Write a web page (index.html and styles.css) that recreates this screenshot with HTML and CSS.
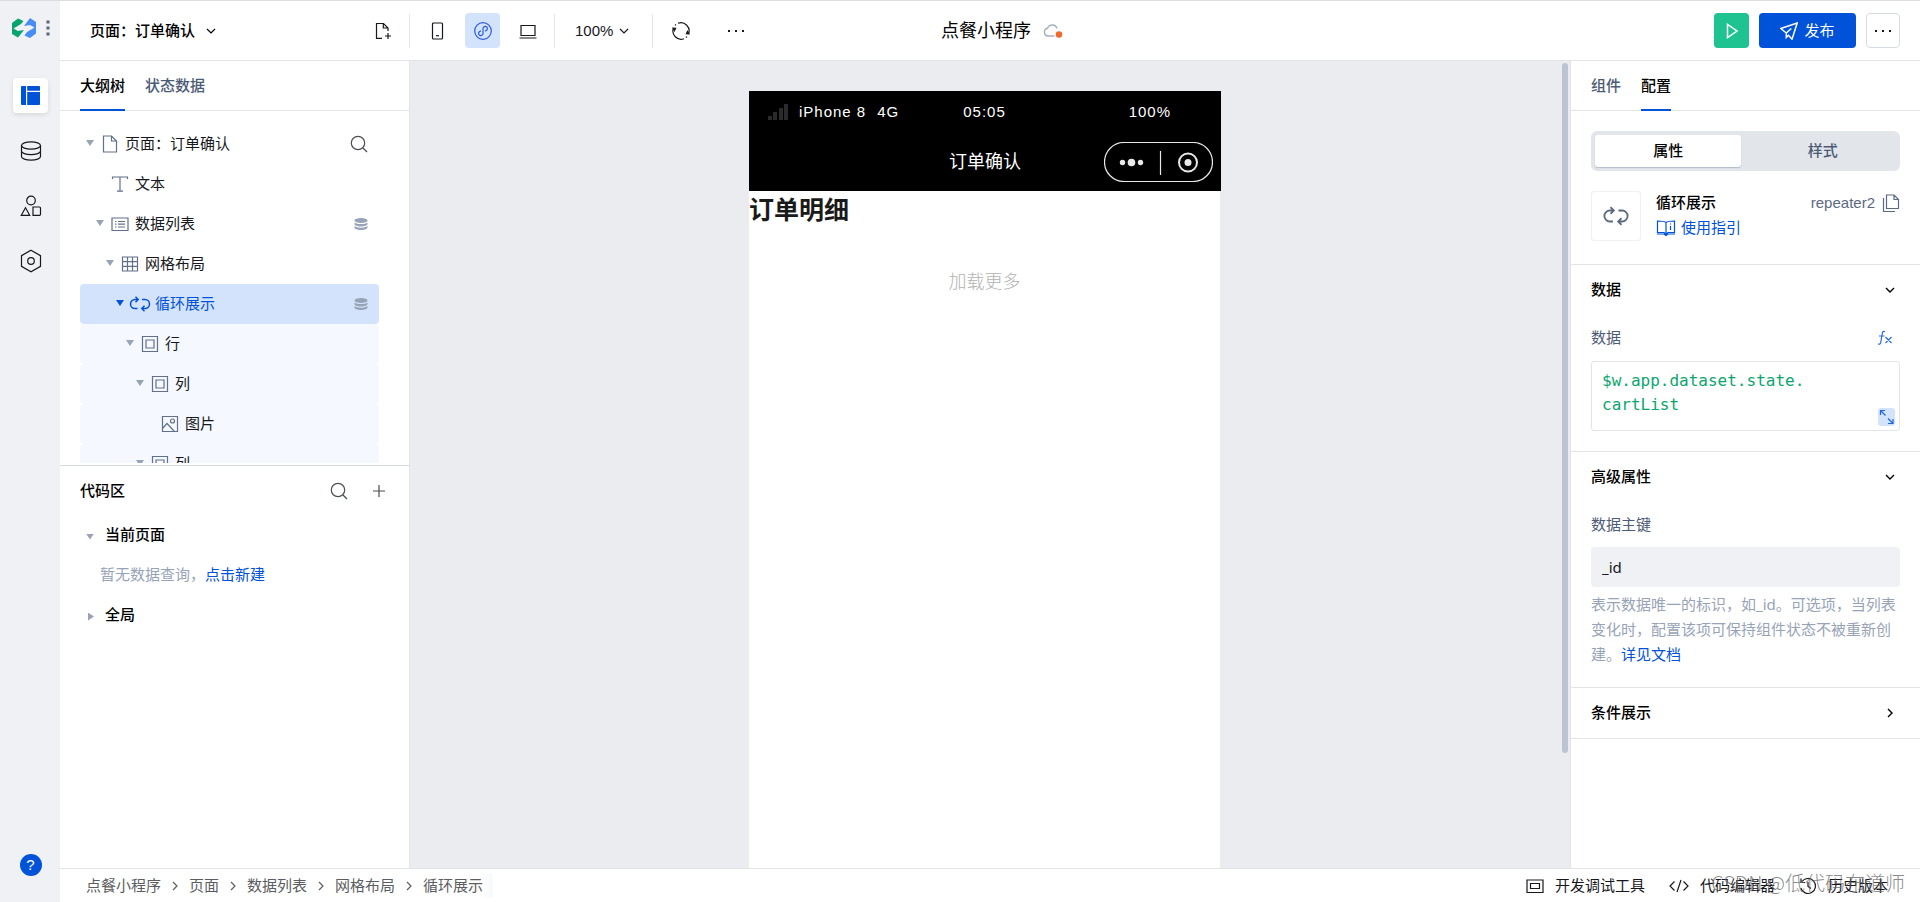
FILE: index.html
```html
<!DOCTYPE html>
<html lang="zh-CN">
<head>
<meta charset="utf-8">
<title>点餐小程序</title>
<link rel="stylesheet" href="styles.css">
</head>
<body>
<svg class="sprite" aria-hidden="true">
  <symbol id="chev-down" viewBox="0 0 10 10"><path d="M1 3l4 4 4-4"/></symbol>
  <symbol id="chev-right" viewBox="0 0 10 10"><path d="M3 1l4 4-4 4"/></symbol>
  <symbol id="search" viewBox="0 0 18 18"><circle cx="8" cy="8" r="6.700"/><path d="M13 13l4 4"/></symbol>
  <symbol id="stack" viewBox="0 0 14 14"><ellipse cx="7" cy="3.500" rx="6.500" ry="2.500" fill="currentColor" stroke="none"/><path d="M.5 5.500v1.500C.5 8.500 3.300 9.500 7 9.500S13.500 8.500 13.500 7V5.500C12 6.700 10 7.100 7 7.100S2 6.700.5 5.500zM.5 9v1.500C.5 12 3.300 13 7 13s6.500-1 6.500-2.500V9C12 10.300 10 10.700 7 10.700S2 10.300.5 9z" fill="currentColor" stroke="none"/></symbol>
  <symbol id="frame" viewBox="0 0 18 18"><path d="M1.500 1.500h15v15h-15zM5 5h8v8H5z"/></symbol>
  <symbol id="loop" viewBox="0 0 22 18"><path d="M8.500 13.500H6a4.500 4.500 0 0 1 0-9h3M6.500 1.800l2.700 2.700-2.700 2.700M13 4.500h3a4.500 4.500 0 0 1 0 9h-3M15.500 10.800l-2.700 2.700 2.700 2.700"/></symbol>
  <symbol id="dots" viewBox="0 0 18 4"><path d="M1 1h2v2H1zM8 1h2v2H8zM15 1h2v2h-2z" fill="currentColor" stroke="none"/></symbol>
</svg>
<div class="app">
  <nav class="rail" aria-label="主导航">
    <div class="brand">
      <svg width="24" height="20" viewBox="0 0 24 20"><path d="M0 5L6 .5 11.500 3 9 6 1.500 10.500 6 13l6-1-6 7.500-6-3.500z" fill="#07a56b" stroke="none"/><path d="M24 15.500L18 20l-5.500-2.500L15 14l7.500-4.500L18 7l-6 1 6-8 6 4z" fill="#488df5" stroke="none"/></svg>
      <svg class="brand-dots" width="4" height="16" viewBox="0 0 4 16"><path d="M.5 .5h3v3h-3zM.5 6.500h3v3h-3zM.5 12.500h3v3h-3z" fill="currentColor" stroke="none"/></svg>
    </div>
    <button class="rail-btn active" aria-label="页面"><svg width="19" height="19" viewBox="0 0 19 19"><path d="M1 0h4v19H1a1 1 0 0 1-1-1V1a1 1 0 0 1 1-1zM6.200 0H18a1 1 0 0 1 1 1v3.700H6.200zM6.200 5.900H19V18a1 1 0 0 1-1 1H6.200z" fill="currentColor" stroke="none"/></svg></button>
    <button class="rail-btn" aria-label="数据源"><svg width="22" height="20" viewBox="0 0 22 20"><ellipse cx="11" cy="4.500" rx="9.500" ry="3.700"/><path d="M1.500 4.500v11c0 2 4.200 3.700 9.500 3.700s9.500-1.700 9.500-3.700v-11M1.500 10c0 2 4.200 3.700 9.500 3.700s9.500-1.700 9.500-3.700"/></svg></button>
    <button class="rail-btn" aria-label="组件库"><svg width="22" height="22" viewBox="0 0 22 22"><circle cx="11" cy="5.500" r="4.300"/><path d="M5.500 12.800l4.200 7.500H1.300zM13 12h6.500a1 1 0 0 1 1 1v6.300a1 1 0 0 1-1 1H13z"/></svg></button>
    <button class="rail-btn" aria-label="设置"><svg width="22" height="24" viewBox="0 0 22 24"><path d="M11 1.300l9.500 5.400v10.600L11 22.700l-9.500-5.400V6.700z"/><circle cx="11" cy="12" r="3.300"/></svg></button>
    <button class="help" aria-label="帮助">?</button>
  </nav>

  <header class="topbar">
    <div class="tools">
      <div class="page-pick">
        <select aria-label="页面"><option>页面：订单确认</option></select>
        <svg width="10" height="10"><use href="#chev-down"/></svg>
      </div>
      <button class="tool" aria-label="新建页面"><svg width="18" height="18" viewBox="0 0 18 18"><path d="M8 16.300H2.500V1.500h7l4.500 4.500v3M9.300 1.500V6H14M14 11v6M11 14h6"/></svg></button>
      <i class="rule"></i>
      <div class="devices">
        <button class="tool" aria-label="手机"><svg width="18" height="18" viewBox="0 0 18 18"><rect x="3.500" y="1" width="10" height="16" rx="1"/><path d="M7 13.700h3"/></svg></button>
        <button class="tool on" aria-label="小程序"><svg width="18" height="18" viewBox="0 0 18 18"><circle cx="9" cy="9" r="8.300"/><path d="M7 9.200a2.200 2.200 0 1 0 2 2.300V6.500a2.200 2.200 0 1 1 2 2.300"/></svg></button>
        <button class="tool" aria-label="电脑"><svg width="18" height="18" viewBox="0 0 18 18"><path d="M2 3.500h14v10H2zM.5 16h17"/></svg></button>
      </div>
      <i class="rule"></i>
      <div class="zoom">
        <select aria-label="缩放"><option>100%</option></select>
        <svg width="10" height="10"><use href="#chev-down"/></svg>
      </div>
      <i class="rule"></i>
      <div class="more-tools">
        <button class="tool" aria-label="刷新"><svg width="18" height="18" viewBox="0 0 18 18"><path d="M6 1.300A8.200 8.200 0 0 1 16.500 12M12 16.700A8.200 8.200 0 0 1 1.500 6M4 2.500l-1 .9M14 15.500l1-.9"/><path d="M0 5.500l4.500.3L2.500 10zM18 12.500l-4.500-.3 2-4.200z" fill="currentColor" stroke="none"/></svg></button>
        <button class="tool" aria-label="更多"><svg width="18" height="4"><use href="#dots"/></svg></button>
      </div>
    </div>
    <h1 class="title">点餐小程序
      <svg width="20" height="16" viewBox="0 0 20 16"><path d="M11.500 13H5a3.900 3.900 0 0 1-.5-7.700A5 5 0 0 1 14 5.500" stroke="#a5afc2" stroke-width="1.400"/><circle cx="16" cy="11.500" r="3.300" fill="#ed6b2d" stroke="none"/></svg>
    </h1>
    <div class="actions">
      <button class="run" aria-label="预览"><svg width="12" height="16" viewBox="0 0 12 16"><path d="M1.500 1.500v13L11 8z"/></svg></button>
      <button class="publish"><svg width="18" height="18" viewBox="0 0 18 18"><path d="M.8 6.500L17.200 1 12 17.200 8.500 13.300 6.300 15.500V11zM6.300 11l5-4.500"/></svg>发布</button>
      <button class="more" aria-label="更多操作"><svg width="18" height="4"><use href="#dots"/></svg></button>
    </div>
  </header>

  <aside class="left">
    <div class="tabs"><button class="tab on">大纲树</button><button class="tab">状态数据</button></div>
    <div class="outline">
      <button class="outline-search" aria-label="搜索"><svg width="18" height="18"><use href="#search"/></svg></button>
      <ul class="tree">
        <li class="node l0"><i class="caret"></i><svg width="18" height="18" viewBox="0 0 18 18"><path d="M2.500 1h8l5 5v11h-13zM10.500 1v5h5"/></svg>页面：订单确认</li>
        <li class="node l1"><i class="caret none"></i><svg width="18" height="18" viewBox="0 0 18 18"><path d="M1.500 4V2h15v2M9 2v14M6 16.200h6"/></svg>文本</li>
        <li class="node l1"><i class="caret"></i><svg width="18" height="18" viewBox="0 0 18 18"><path d="M1 3h16v12.500H1zM4 6.500h1.500M7 6.500h7M4 9.200h1.500M7 9.200h7M4 12h1.500M7 12h7"/></svg>数据列表<svg class="bound" width="14" height="14"><use href="#stack"/></svg></li>
        <li class="node l2"><i class="caret"></i><svg width="18" height="18" viewBox="0 0 18 18"><path d="M1.500 2h15v14h-15zM1.500 6.600h15M1.500 11.300h15M6.500 2v14M11.500 2v14"/></svg>网格布局</li>
        <li class="node l3 selected"><i class="caret"></i><svg width="22" height="18"><use href="#loop"/></svg>循环展示<svg class="bound" width="14" height="14"><use href="#stack"/></svg></li>
        <li class="node l4 inside"><i class="caret"></i><svg width="18" height="18"><use href="#frame"/></svg>行</li>
        <li class="node l5 inside"><i class="caret"></i><svg width="18" height="18"><use href="#frame"/></svg>列</li>
        <li class="node l6 inside"><i class="caret none"></i><svg width="18" height="18" viewBox="0 0 18 18"><path d="M1.500 1.500h15v15h-15zM1.500 13.500l4.500-5 7.500 8"/><circle cx="11.500" cy="6" r="2"/></svg>图片</li>
        <li class="node l5 inside"><i class="caret"></i><svg width="18" height="18"><use href="#frame"/></svg>列</li>
      </ul>
    </div>
    <section class="code">
      <div class="code-head"><h2>代码区</h2>
        <button aria-label="搜索代码"><svg width="18" height="18"><use href="#search"/></svg></button>
        <button aria-label="新建"><svg width="18" height="18" viewBox="0 0 18 18"><path d="M9 3v12M3 9h12"/></svg></button>
      </div>
      <h3 class="group"><i class="caret"></i>当前页面</h3>
      <p class="empty">暂无数据查询，<a href="#">点击新建</a></p>
      <h3 class="group"><i class="caret side"></i>全局</h3>
    </section>
  </aside>

  <main class="canvas">
    <div class="phone">
      <div class="phone-top">
        <div class="status">
          <span class="carrier"><svg width="20" height="16" viewBox="0 0 20 16"><path d="M0 12h4v4H0zM5 8h4v8H5zM11 4h4v12h-4zM16 0h4v16h-4z" fill="#2b2b2b" stroke="none"/></svg>iPhone 8 <span>4G</span></span>
          <span class="clock">05:05</span>
          <span class="battery">100%</span>
        </div>
        <div class="navbar">
          <span class="nav-title">订单确认</span>
          <svg class="capsule" width="109" height="40" viewBox="0 0 109 40"><rect x=".5" y=".5" width="108" height="39" rx="19.500"/><path d="M56.500 9v24"/><g fill="currentColor" stroke="none"><circle cx="18.500" cy="20.500" r="2.700"/><circle cx="27.500" cy="20.500" r="3.800"/><circle cx="36.500" cy="20.500" r="2.700"/><circle cx="84" cy="20.500" r="3.500"/></g><circle cx="84" cy="20.500" r="9" stroke-width="2"/></svg>
        </div>
      </div>
      <div class="screen">
        <h2>订单明细</h2>
        <p>加载更多</p>
      </div>
    </div>
    <div class="scroll"></div>
  </main>

  <aside class="right">
    <div class="tabs"><button class="tab">组件</button><button class="tab on">配置</button></div>
    <section class="intro">
      <div class="segment"><button class="on">属性</button><button>样式</button></div>
      <div class="component">
        <div class="thumb"><svg width="28" height="22" viewBox="0 0 22 18"><use href="#loop"/></svg></div>
        <div class="about"><h2>循环展示</h2><a href="#"><svg width="20" height="18" viewBox="0 0 20 18"><path d="M10 3.500C8.500 2.200 7 2 1.500 2v11.500H8l2 1.500 2-1.500h6.500V2C13 2 11.500 2.200 10 3.500zM10 3.500V14M14.500 7v4M14.500 4.500v1M1 15h7l2 1.500 2-1.500h7"/></svg>使用指引</a></div>
        <div class="ident">repeater2<button aria-label="复制"><svg width="18" height="20" viewBox="0 0 18 20"><path d="M4.500 2h7.500l4.500 4.500V15.500h-12zM12 2v4.500h4.500M1.500 5v13.500H13"/></svg></button></div>
      </div>
    </section>
    <section class="block">
      <h2>数据<svg width="10" height="10"><use href="#chev-down"/></svg></h2>
      <div class="field-label"><label for="expr">数据</label><button aria-label="表达式"><svg width="16" height="16" viewBox="0 0 16 16"><path d="M8 1.500C6 .8 5.500 2 5.200 4L3.800 12c-.3 2-1 2.500-2.800 2M2 6h5.500M8.500 7l6 6M14.500 7l-6 6"/></svg></button></div>
      <div class="editor">
        <textarea id="expr" rows="2" spellcheck="false">$w.app.dataset.state.
cartList</textarea>
        <button class="expand" aria-label="展开"><svg width="17" height="18" viewBox="0 0 17 18"><path d="M2.500 7V2.500H7M2.500 2.500l5 5M10 15.500h5V11M15 15.500l-5-5"/></svg></button>
      </div>
    </section>
    <section class="block">
      <h2>高级属性<svg width="10" height="10"><use href="#chev-down"/></svg></h2>
      <div class="field-label plain"><label for="key">数据主键</label></div>
      <input id="key" type="text" value="_id">
      <p class="hint">表示数据唯一的标识，如_id。可选项，当列表变化时，配置该项可保持组件状态不被重新创建。<a href="#">详见文档</a></p>
    </section>
    <section class="block closed">
      <h2>条件展示<svg width="10" height="10"><use href="#chev-right"/></svg></h2>
    </section>
  </aside>

  <footer class="bottom">
    <nav class="crumbs" aria-label="路径">
      <span>点餐小程序</span><svg width="10" height="10"><use href="#chev-right"/></svg><span>页面</span><svg width="10" height="10"><use href="#chev-right"/></svg><span>数据列表</span><svg width="10" height="10"><use href="#chev-right"/></svg><span>网格布局</span><svg width="10" height="10"><use href="#chev-right"/></svg><span class="last">循环展示</span>
    </nav>
    <div class="links">
      <button><svg width="18" height="18" viewBox="0 0 18 18"><path d="M1 3h16v12.500H1zM4.500 6.500h9v5h-9z"/></svg>开发调试工具</button>
      <button><svg width="20" height="14" viewBox="0 0 20 14"><path d="M5.500 2.500L1 7l4.500 4.500M14.500 2.500L19 7l-4.500 4.500M12 1L8 13"/></svg>代码编辑器</button>
      <button><svg width="18" height="18" viewBox="0 0 18 18"><path d="M3 4.500A7.500 7.500 0 1 1 1.800 11M2 1.500V5.500h4M9 5v4.500l3 2"/></svg>历史版本</button>
    </div>
    <span class="watermark">CSDN @低代码布道师</span>
  </footer>
</div>
</body>
</html>
```
FILE: styles.css
```css
* { box-sizing: border-box; }
html, body { height: 100%; margin: 0; }
body {
  font: 15px/24px "Liberation Sans", "Noto Sans CJK SC", sans-serif;
  color: #16181d;
  background: #fff;
}
h1, h2, h3, p, ul { margin: 0; padding: 0; }
h1, h2, h3 { font-size: 15px; font-weight: 500; color: #000; }
ul { list-style: none; }
a { color: #0052d9; text-decoration: none; }
button, select, input, textarea { font: inherit; color: inherit; border: 0; padding: 0; margin: 0; background: none; }
select { appearance: none; outline: 0; }
svg { flex: none; fill: none; stroke: currentColor; stroke-width: 1.2; }
.sprite { position: absolute; width: 0; height: 0; }

.app {
  height: 100vh;
  border-top: 1px solid #dcdddf;
  display: grid;
  grid-template: 60px minmax(0, 1fr) 34px / 60px 350px minmax(0, 1fr) 350px;
  grid-template-areas: "rail top top top" "rail left canvas right" "rail bottom bottom bottom";
}

/* Icon rail */
.rail { grid-area: rail; background: #f0f1f5; display: flex; flex-direction: column; align-items: center; padding: 17px 0 26px 1px; gap: 20px; }
.brand { display: flex; align-items: center; gap: 10px; height: 20px; margin-bottom: 20px; }
.brand-dots { color: #5b6577; }
.rail-btn { width: 35px; height: 35px; border-radius: 4px; display: flex; align-items: center; justify-content: center; }
.rail-btn.active { background: #fff; color: #0052d9; box-shadow: 0 2px 5px rgba(0, 0, 0, .1); }
.help { margin-top: auto; width: 22px; height: 22px; border-radius: 50%; background: #0052d9; color: #fff; line-height: 22px; text-align: center; }

/* Top bar */
.topbar { grid-area: top; border-bottom: 1px solid #e2e4ea; display: grid; grid-template-columns: 1fr auto 1fr; align-items: center; padding: 0 20px 0 30px; }
.tools, .devices, .more-tools, .actions { display: flex; align-items: center; }
.page-pick { display: flex; align-items: center; gap: 10px; width: 275px; font-weight: 500; color: #000; }
.tool { width: 35px; height: 35px; border-radius: 4px; display: flex; align-items: center; justify-content: center; }
.tool.on { background: #d4e3fc; color: #2a5be0; }
.rule { width: 1px; height: 34px; background: #e2e4ea; margin: 0 10px 0 9px; }
.devices { gap: 10px; }
.zoom { display: flex; align-items: center; gap: 5px; padding: 0 14px 0 10px; }
.more-tools { gap: 20px; }
.title { display: flex; align-items: center; gap: 12px; font-size: 18px; font-weight: 400; margin-left: 14px; }
.actions { justify-content: flex-end; gap: 10px; }
.actions button { height: 35px; border-radius: 4px; display: flex; align-items: center; justify-content: center; }
.run { width: 35px; background: #1fc291; color: #fff; }
.publish { width: 97px; gap: 6px; background: #0052d9; color: #fff; }
.run svg, .publish svg { stroke-width: 1.5; }
.actions .more { width: 34px; border: 1px solid #d7dbe4; }

/* Tabs shared by both side panels */
.tabs { height: 50px; flex: none; display: flex; gap: 20px; padding: 0 20px; border-bottom: 1px solid #e2e4ea; }
.tab { height: 50px; padding-top: 2px; font-weight: 500; color: #4b5b76; border-bottom: 2px solid transparent; }
.tab.on { color: #000; border-bottom-color: #0052d9; }

/* Left panel */
.left { grid-area: left; border-right: 1px solid #e2e4ea; display: flex; flex-direction: column; min-height: 0; }
.outline { position: relative; height: 355px; flex: none; overflow: hidden; padding: 13px 30px 0 20px; border-bottom: 1px solid #d7dbe0; }
.outline-search { position: absolute; right: 41px; top: 24px; height: 18px; display: flex; color: #4a4d52; }
.tree { height: 339px; overflow: hidden; }
.node { height: 40px; border-radius: 4px; display: flex; align-items: center; gap: 6px; padding-right: 11px; }
.node svg { color: #62708a; }
.node .bound { color: #97a3b7; margin-left: auto; }
.caret { flex: none; width: 8px; height: 6px; margin-bottom: 2px; background: #97a3b7; clip-path: polygon(0 0, 100% 0, 50% 100%); }
.node .caret { margin-right: 1px; }
.caret.none { visibility: hidden; }
.l0 { padding-left: 6px; }
.l1 { padding-left: 16px; }
.l2 { padding-left: 26px; }
.l3 { padding-left: 36px; }
.l4 { padding-left: 46px; }
.l5 { padding-left: 56px; }
.l6 { padding-left: 66px; }
.selected { background: #d4e3fc; color: #0052d9; }
.selected svg { color: #0052d9; stroke-width: 1.5; }
.selected .caret { background: #0052d9; }
.selected > svg:first-of-type { margin: 0 -2px; }
.inside { background: #f5f8ff; }

.code { padding: 5px 20px; }
.code-head { display: flex; align-items: center; height: 40px; gap: 22px; }
.code-head h2 { margin-right: auto; }
.code-head button { display: flex; color: #4a4d52; }
.code-head button:last-child { margin-right: 1px; }
.group { display: flex; align-items: center; gap: 11px; height: 40px; padding-left: 6px; }
.code-head + .group { margin-top: 4px; }
.group .caret { margin-bottom: 0; margin-top: 3px; }
.group .side { width: 6px; height: 8px; margin-left: 2px; clip-path: polygon(0 0, 100% 50%, 0 100%); }
.empty { line-height: 40px; padding-left: 20px; color: #97a3b7; }

/* Canvas with device preview */
.canvas { grid-area: canvas; position: relative; background: #ebecf0; display: flex; justify-content: center; padding: 30px 10px 0 0; }
.phone { width: 472px; display: flex; flex-direction: column; }
.phone-top { height: 100px; background: #000; color: #fff; }
.status { display: grid; grid-template-columns: 1fr auto 1fr; align-items: center; height: 42px; padding: 0 50px 0 19px; letter-spacing: 1px; }
.carrier { display: flex; align-items: center; gap: 11px; }
.clock { margin-left: 30px; }
.battery { text-align: right; }
.navbar { display: grid; grid-template-columns: 1fr auto 1fr; align-items: center; height: 58px; padding: 0 8px; }
.nav-title { grid-column: 2; font-size: 18px; }
.capsule { justify-self: end; color: #e8e8e8; }
.screen { flex: 1; background: #fff; margin-right: 1px; }
.screen h2 { font-size: 25px; font-weight: 700; line-height: 38px; color: #1a1a1a; }
.screen p { margin-top: 41px; text-align: center; font-size: 18px; font-weight: 300; color: #b2b2b2; }
.scroll { position: absolute; right: 2px; top: 2px; bottom: 115px; width: 6px; border-radius: 3px; background: #bbc4d0; }

/* Right panel */
.right { grid-area: right; border-left: 1px solid #e2e4ea; overflow: hidden; }
.intro { padding: 20px 20px 23px; }
.segment { display: flex; height: 40px; padding: 4px 0 4px 4px; border-radius: 6px; background: #e2e5ea; }
.segment button { flex: 1; border-radius: 3px; font-weight: 500; color: #4b5b76; }
.segment .on { flex: none; width: 48%; margin-right: 4px; background: #fff; color: #000; box-shadow: 0 1px 1px #b3bdca; }
.component { display: flex; margin-top: 20px; gap: 15px; }
.thumb { width: 50px; height: 50px; border: 1px solid #eef0f3; border-radius: 3px; display: flex; align-items: center; justify-content: center; color: #5b6982; }
.thumb svg { stroke-width: 1.5; }
.about a { display: flex; align-items: center; gap: 5px; line-height: 26px; }
.ident { margin-left: auto; display: flex; align-items: flex-start; gap: 7px; color: #5b6982; }
.ident button { display: flex; padding-top: 2px; }
.block { border-top: 1px solid #e2e4ea; padding: 0 20px 20px; }
.block h2 { display: flex; align-items: center; justify-content: space-between; height: 50px; padding-right: 5px; }
.block h2 svg { stroke-width: 1.4; }
.block.closed { padding-bottom: 0; border-bottom: 1px solid #e2e4ea; }
.field-label { display: flex; align-items: center; justify-content: space-between; height: 46px; color: #4b5b76; padding-right: 7px; }
.field-label.plain { height: 45px; }
.field-label button { display: flex; color: #2a6be0; }
.editor { position: relative; height: 70px; border: 1px solid #e2e4ea; border-radius: 3px; }
.editor textarea { display: block; width: 100%; height: 68px; padding: 7px 10px; resize: none; outline: 0; overflow: hidden; font: 16px/24px "DejaVu Sans Mono", monospace; color: #0aa66e; }
.expand { position: absolute; right: 4px; bottom: 4px; width: 17px; height: 18px; border-radius: 3px; background: #d4e3fc; color: #1f66e5; display: flex; }
.block input { display: block; width: 100%; height: 40px; padding: 0 11px; border-radius: 4px; background: #f0f1f5; font-family: "Noto Sans", "Noto Sans CJK SC", sans-serif; outline: 0; }
.hint { margin-top: 5px; line-height: 25px; color: #97a3b7; font-family: "Noto Sans", "Noto Sans CJK SC", sans-serif; }

/* Status bar */
.bottom { grid-area: bottom; position: relative; border-top: 1px solid #e2e4ea; display: flex; justify-content: space-between; align-items: center; padding: 0 32px 0 26px; }
.crumbs { display: flex; align-items: center; gap: 9px; color: #5b5d61; }
.last { padding-right: 10px; background: linear-gradient(to left, #f7f8fa, #fff 12px); }
.links { display: flex; gap: 24px; }
.links button { display: flex; align-items: center; gap: 11px; }
.watermark { position: absolute; right: 15px; top: 2px; font: 300 20px/24px "Noto Sans CJK SC", sans-serif; color: rgba(100, 100, 100, .75); pointer-events: none; }
```
